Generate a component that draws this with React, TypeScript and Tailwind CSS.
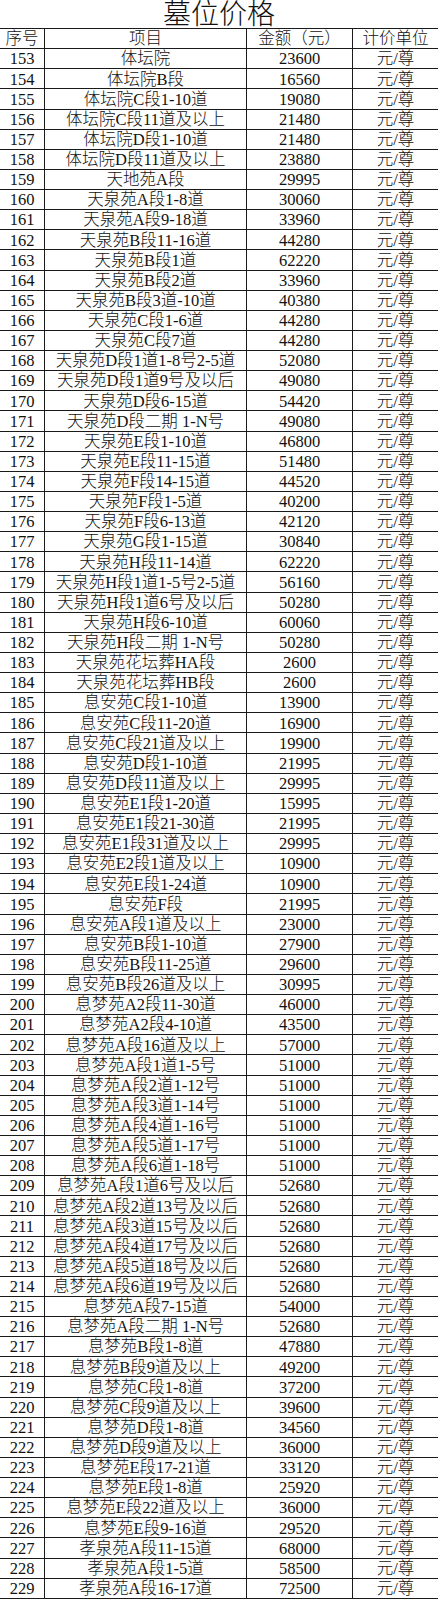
const rows: [number, string, string][] = [
  [153, "体坛院", "23600"],
  [154, "体坛院B段", "16560"],
  [155, "体坛院C段1-10道", "19080"],
  [156, "体坛院C段11道及以上", "21480"],
  [157, "体坛院D段1-10道", "21480"],
  [158, "体坛院D段11道及以上", "23880"],
  [159, "天地苑A段", "29995"],
  [160, "天泉苑A段1-8道", "30060"],
  [161, "天泉苑A段9-18道", "33960"],
  [162, "天泉苑B段11-16道", "44280"],
  [163, "天泉苑B段1道", "62220"],
  [164, "天泉苑B段2道", "33960"],
  [165, "天泉苑B段3道-10道", "40380"],
  [166, "天泉苑C段1-6道", "44280"],
  [167, "天泉苑C段7道", "44280"],
  [168, "天泉苑D段1道1-8号2-5道", "52080"],
  [169, "天泉苑D段1道9号及以后", "49080"],
  [170, "天泉苑D段6-15道", "54420"],
  [171, "天泉苑D段二期 1-N号", "49080"],
  [172, "天泉苑E段1-10道", "46800"],
  [173, "天泉苑E段11-15道", "51480"],
  [174, "天泉苑F段14-15道", "44520"],
  [175, "天泉苑F段1-5道", "40200"],
  [176, "天泉苑F段6-13道", "42120"],
  [177, "天泉苑G段1-15道", "30840"],
  [178, "天泉苑H段11-14道", "62220"],
  [179, "天泉苑H段1道1-5号2-5道", "56160"],
  [180, "天泉苑H段1道6号及以后", "50280"],
  [181, "天泉苑H段6-10道", "60060"],
  [182, "天泉苑H段二期 1-N号", "50280"],
  [183, "天泉苑花坛葬HA段", "2600"],
  [184, "天泉苑花坛葬HB段", "2600"],
  [185, "息安苑C段1-10道", "13900"],
  [186, "息安苑C段11-20道", "16900"],
  [187, "息安苑C段21道及以上", "19900"],
  [188, "息安苑D段1-10道", "21995"],
  [189, "息安苑D段11道及以上", "29995"],
  [190, "息安苑E1段1-20道", "15995"],
  [191, "息安苑E1段21-30道", "21995"],
  [192, "息安苑E1段31道及以上", "29995"],
  [193, "息安苑E2段1道及以上", "10900"],
  [194, "息安苑E段1-24道", "10900"],
  [195, "息安苑F段", "21995"],
  [196, "息安苑A段1道及以上", "23000"],
  [197, "息安苑B段1-10道", "27900"],
  [198, "息安苑B段11-25道", "29600"],
  [199, "息安苑B段26道及以上", "30995"],
  [200, "息梦苑A2段11-30道", "46000"],
  [201, "息梦苑A2段4-10道", "43500"],
  [202, "息梦苑A段16道及以上", "57000"],
  [203, "息梦苑A段1道1-5号", "51000"],
  [204, "息梦苑A段2道1-12号", "51000"],
  [205, "息梦苑A段3道1-14号", "51000"],
  [206, "息梦苑A段4道1-16号", "51000"],
  [207, "息梦苑A段5道1-17号", "51000"],
  [208, "息梦苑A段6道1-18号", "51000"],
  [209, "息梦苑A段1道6号及以后", "52680"],
  [210, "息梦苑A段2道13号及以后", "52680"],
  [211, "息梦苑A段3道15号及以后", "52680"],
  [212, "息梦苑A段4道17号及以后", "52680"],
  [213, "息梦苑A段5道18号及以后", "52680"],
  [214, "息梦苑A段6道19号及以后", "52680"],
  [215, "息梦苑A段7-15道", "54000"],
  [216, "息梦苑A段二期 1-N号", "52680"],
  [217, "息梦苑B段1-8道", "47880"],
  [218, "息梦苑B段9道及以上", "49200"],
  [219, "息梦苑C段1-8道", "37200"],
  [220, "息梦苑C段9道及以上", "39600"],
  [221, "息梦苑D段1-8道", "34560"],
  [222, "息梦苑D段9道及以上", "36000"],
  [223, "息梦苑E段17-21道", "33120"],
  [224, "息梦苑E段1-8道", "25920"],
  [225, "息梦苑E段22道及以上", "36000"],
  [226, "息梦苑E段9-16道", "29520"],
  [227, "孝泉苑A段11-15道", "68000"],
  [228, "孝泉苑A段1-5道", "58500"],
  [229, "孝泉苑A段16-17道", "72500"],
];

function Row({ cells }: { cells: (string | number)[] }) {
  return (
    <div className="grid grid-cols-[45px_202px_106px_85px] h-[20.14px] border-b border-[#1a1a1a]">
      {cells.map((c, i) => (
        <div
          key={i}
          className={`flex items-center justify-center leading-none pt-[2px] whitespace-nowrap ${i < 3 ? "border-r border-[#1a1a1a]" : ""}`}
        >
          {c}
        </div>
      ))}
    </div>
  );
}

export default function App() {
  return (
    <div
      className="w-[438px] bg-white text-[#111] text-[16.5px] font-light"
      style={{ fontFamily: '"Liberation Serif", "Noto Sans CJK SC", serif' }}
    >
      <h1 className="h-[28px] flex items-center justify-center text-[28px] leading-none font-light pt-[2px]">墓位价格</h1>
      <div className="border-t border-[#1a1a1a]">
        <Row cells={["序号", "项目", "金额（元）", "计价单位"]} />
        {rows.map(r => (
          <Row key={r[0]} cells={[r[0], r[1], r[2], "元/尊"]} />
        ))}
      </div>
    </div>
  );
}
